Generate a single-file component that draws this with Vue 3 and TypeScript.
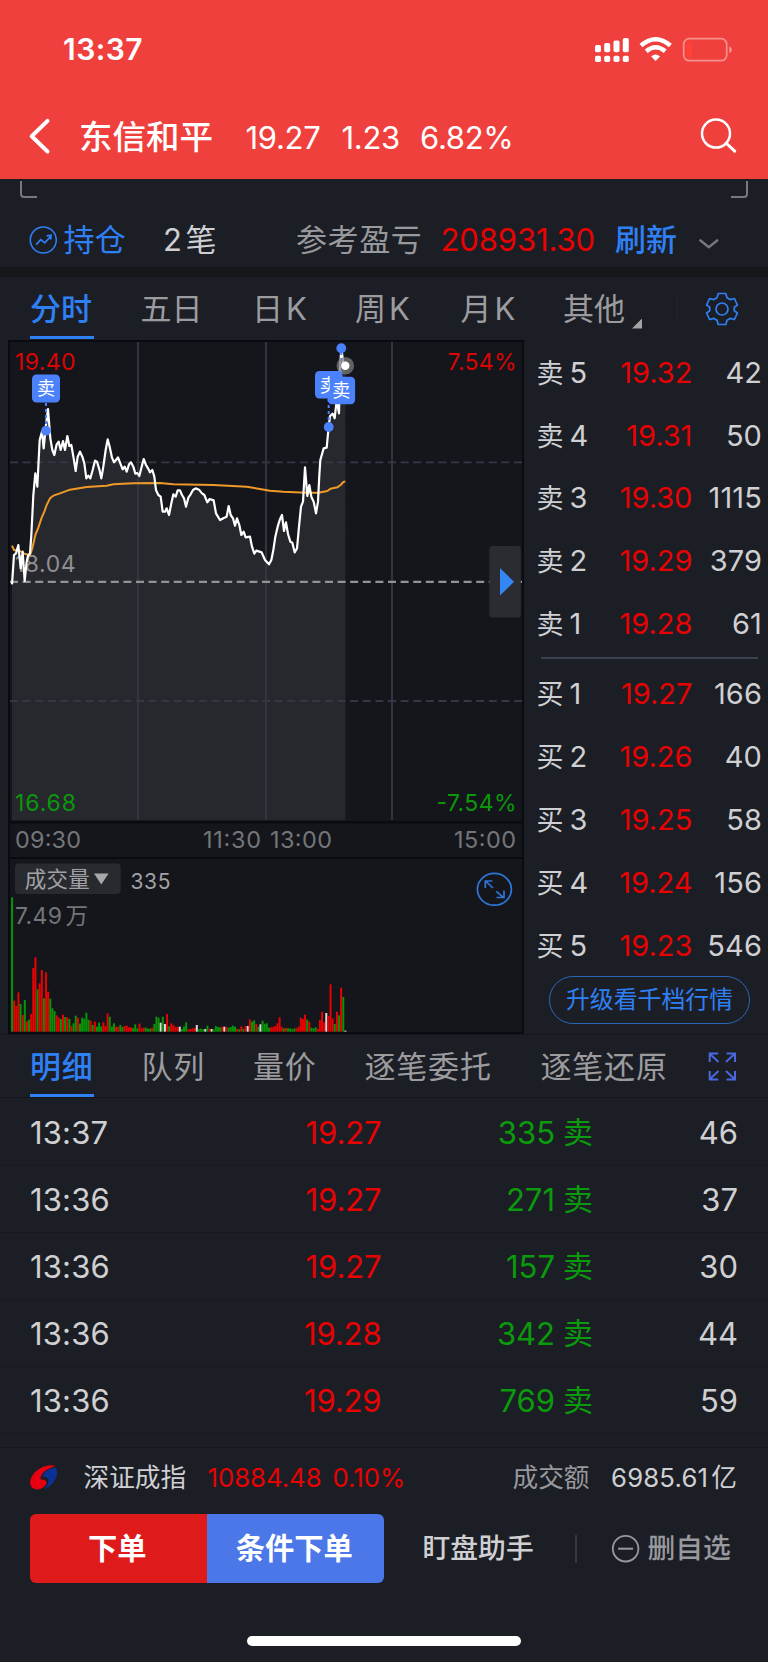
<script setup lang="ts">
type Side = 'r' | 'g' | 'w'
interface Quote { label: string; level: number; price: string; qty: string }
interface Trade { time: string; price: string; volume: string; count: string }

const asks: Quote[] = [
  { label: '卖', level: 5, price: '19.32', qty: '42' },
  { label: '卖', level: 4, price: '19.31', qty: '50' },
  { label: '卖', level: 3, price: '19.30', qty: '1115' },
  { label: '卖', level: 2, price: '19.29', qty: '379' },
  { label: '卖', level: 1, price: '19.28', qty: '61' },
]
const bids: Quote[] = [
  { label: '买', level: 1, price: '19.27', qty: '166' },
  { label: '买', level: 2, price: '19.26', qty: '40' },
  { label: '买', level: 3, price: '19.25', qty: '58' },
  { label: '买', level: 4, price: '19.24', qty: '156' },
  { label: '买', level: 5, price: '19.23', qty: '546' },
]
const trades: Trade[] = [
  { time: '13:37', price: '19.27', volume: '335', count: '46' },
  { time: '13:36', price: '19.27', volume: '271', count: '37' },
  { time: '13:36', price: '19.27', volume: '157', count: '30' },
  { time: '13:36', price: '19.28', volume: '342', count: '44' },
  { time: '13:36', price: '19.29', volume: '769', count: '59' },
]

/* Minute prices, in thirds of a pixel. */
const price =
  '36,748 42,660 48,655 55,630 62,700 68,650 74,738 80,680 84,662 90,655 94,600 100,480 106,415 112,455 119,315 126,290 131,340 138,270 144,222 151,310 157,345 163,360 170,328 176,320 182,345 189,318 195,345 202,303 208,333 214,330 221,370 227,408 233,365 240,350 247,365 253,385 259,430 265,422 271,430 278,405 285,377 291,380 298,403 304,430 310,395 317,345 323,313 329,335 336,368 342,382 348,375 354,367 361,385 368,403 374,395 380,410 387,388 393,382 400,395 406,416 412,414 418,423 425,395 431,372 438,390 444,400 450,412 457,405 463,425 468,465 475,480 482,485 488,530 495,530 500,520 507,540 514,505 520,478 527,485 533,466 540,466 546,480 552,490 558,515 565,488 572,478 579,465 587,460 597,464 606,475 613,480 622,502 629,492 641,496 648,535 660,555 673,548 680,545 686,513 692,540 699,550 705,572 711,550 718,570 724,600 731,590 737,607 750,605 756,635 763,656 769,647 785,652 795,675 807,688 814,675 820,645 826,605 833,575 839,555 846,540 852,588 858,562 864,597 871,620 877,623 884,652 891,640 897,575 903,515 909,500 915,397 922,483 928,450 934,485 941,500 948,535 954,500 958,420 961,375 971,340 980,338 986,276 990,243 998,236 1004,250 1010,195 1017,235 1020,100 1024,40 1030,85 1036,92'
const average =
  '36,632 42,645 60,648 75,657 90,660 97,640 106,600 115,578 125,548 133,530 140,510 150,490 160,482 180,475 210,464 260,456 320,452 340,448 400,445 480,444 520,448 640,450 740,455 775,461 810,467 850,470 920,473 955,473 982,468 992,461 1012,457 1022,450 1030,441 1036,439'
const area = `36,1456 ${price} 1036,1456`

const volumeData =
  'g352 r662 r678 r637 g672 r705 g660 r724 g719 r702 r564 r532 g628 r610 r570 g655 r577 r635 g656 g685 g693 r706 r713 g717 r704 g711 r712 g717 r738 g730 g707 r713 g731 g713 g716 g698 g719 r722 g735 r725 g740 g728 g739 r727 r738 r700 g710 g740 g730 r740 r740 g735 g741 r738 r737 r742 r742 g744 g733 g745 r731 r745 r743 g743 g746 g746 r743 g732 g710 g713 w728 g710 w732 r702 g739 r730 r735 r740 r741 w740 g747 g739 g727 r748 r747 r745 r744 w735 g748 g746 g748 w747 g737 r746 w747 g748 g738 g741 g742 r740 w740 r741 g743 g741 g737 g740 r747 g748 r739 g747 r738 w738 r718 g725 g721 r732 g740 w733 g722 g731 g730 g743 r742 r741 r738 r730 r712 r740 g745 r744 g745 g745 g748 g745 r744 r740 r713 r717 r704 g719 r725 g743 g745 g742 r747 r720 r695 r727 w699 r708 r613 r715 g732 r695 g706 r623 g651 w752'
const fills: Record<Side, string> = { r: '#e80202', g: '#079407', w: '#dcdcdc' }
const entries = volumeData.split(' ')
const volumes = entries.map((v, i) => ({
  x: 33.2 + (i * 1000) / (entries.length - 1),
  y: Number(v.slice(1)),
  h: 755 - Number(v.slice(1)),
  fill: fills[v[0] as Side],
}))
</script>

<template>
  <div class="app">
    <header class="head">
      <div class="status">
        <span class="clock">13:37</span>
        <svg class="status-icons" width="140" height="30" viewBox="592 33 140 30">
          <g fill="#fff">
            <rect x="595" y="44" width="6" height="7.300" rx="1.800" /><rect x="604.200" y="42" width="6" height="9.300" rx="1.800" />
            <rect x="613.500" y="39.500" width="6" height="11.800" rx="1.800" /><rect x="622.800" y="37" width="6" height="14.300" rx="1.800" />
            <rect x="595" y="54.700" width="6" height="6.400" rx="1.800" /><rect x="604.200" y="54.700" width="6" height="6.400" rx="1.800" />
            <rect x="613.500" y="54.700" width="6" height="6.400" rx="1.800" /><rect x="622.800" y="54.700" width="6" height="6.400" rx="1.800" />
            <path d="M655.600 60l-4.400-4.500q4.400-4 8.800 0z" />
          </g>
          <path d="M641 44.500q14.600-12.600 29.400 0M646.200 50.300q9.400-8 19 0" fill="none" stroke="#fff" stroke-width="4.400" />
          <rect x="683.700" y="37.700" width="43" height="22" rx="5.600" fill="none" stroke="#fff" stroke-opacity=".42" stroke-width="1.700" />
          <rect x="686.300" y="40.500" width="5.700" height="16.400" rx="2.400" fill="#ff4238" />
          <path d="M729.300 45.200q2.500 1 2.500 3.500t-2.500 3.500z" fill="#fff" fill-opacity=".45" />
        </svg>
      </div>
      <div class="title">
        <svg class="back" width="24" height="40" viewBox="0 0 24 40"><path d="M20.500 3.900L4.700 19.300l15.800 15.200" fill="none" stroke="#fff" stroke-width="4" stroke-linecap="round" stroke-linejoin="round" /></svg>
        <h1>东信和平</h1>
        <span class="t-price">19.27</span>
        <span class="t-change">1.23</span>
        <span class="t-pct">6.82%</span>
        <svg class="search" width="38" height="38" viewBox="0 0 38 38"><circle cx="16" cy="15.600" r="14" fill="none" stroke="#fff" stroke-width="2.500" /><path d="M26.100 25l8.600 8.200" stroke="#fff" stroke-width="3" stroke-linecap="round" /></svg>
      </div>
    </header>

    <div class="brackets"><i class="bl"></i><i class="br"></i></div>

    <section class="holding">
      <svg width="28" height="28" viewBox="0 0 28 28" fill="none" stroke="#2f80f5" stroke-width="1.600"><circle cx="14.300" cy="14" r="13" /><path d="M7.100 18.600l4.700-5 4 3.300 5.700-6.400M17.600 9.800l4.400-.5-.3 4.200" stroke-width="1.700" /></svg>
      <span class="hold-name">持仓</span>
      <span class="hold-count">2<b>笔</b></span>
      <span class="hold-label">参考盈亏</span>
      <span class="hold-value">208931.30</span>
      <span class="hold-refresh">刷新</span>
      <svg class="chev" width="22" height="12" viewBox="0 0 22 12"><path d="M1.600 1.700l9.200 7.600L20 1.700" fill="none" stroke="#77787c" stroke-width="2.400" /></svg>
    </section>

    <div class="band"></div>

    <nav class="periods">
      <span class="on">分时</span><span>五日</span><span>日<em>K</em></span><span>周<em>K</em></span><span>月<em>K</em></span><span>其他</span>
      <i class="tri"></i><i class="vsep"></i>
      <svg class="gear" width="34" height="34" viewBox="-17 -17 34 34" fill="none" stroke="#2f80f5" stroke-width="1.700" stroke-linejoin="round">
        <circle r="6" />
        <path d="M-3.800-15.500h7.600l1.200 4.300 3.100 1.800 4.300-1.100 3 6.500-3.100 2.200v3.600l3.100 2.200-3 6.500-4.300-1.100-3.100 1.800-1.200 4.300h-7.600l-1.200-4.300-3.100-1.800-4.300 1.100-3-6.500 3.100-2.200v-3.600l-3.100-2.200 3-6.500 4.300 1.100 3.100-1.800z" />
      </svg>
    </nav>

    <main class="market">
      <svg class="chart" width="516" height="694" viewBox="8 340 516 694">
        <defs><clipPath id="half"><rect x="315" y="371" width="14.700" height="27.500" /></clipPath></defs>
        <rect x="8" y="340" width="516" height="694" fill="#0a0b10" />
        <path d="M10 342H522V821H10zM10 823.500H522V857H10zM10 859H522V1032H10z" fill="#15161b" />
        <g transform="translate(0 335) scale(.333333)"><polygon :points="area" fill="#27282d" /></g>
        <path d="M138 342V820M266 342V820M392 342V820" stroke="#353643" stroke-width="1.900" />
        <path d="M10 462.300H522M10 701H522" stroke="#363646" stroke-width="1.800" stroke-dasharray="8 4.600" />
        <path d="M10 581.800H522" stroke="#939396" stroke-width="2.200" stroke-dasharray="8 4.600" />
        <g class="num" font-size="23">
          <text x="15" y="370" textLength="60.500" fill="#dc0404">19.40</text>
          <text x="516.500" y="370" text-anchor="end" textLength="69" fill="#dc0404">7.54%</text>
          <text x="15" y="571.500" textLength="60.500" fill="#8f8f92">18.04</text>
          <text x="15" y="810.600" textLength="61" fill="#0b970b">16.68</text>
          <text x="516.500" y="810.600" text-anchor="end" textLength="80" fill="#0b970b">-7.54%</text>
        </g>
        <g transform="translate(0 335) scale(.333333)" fill="none" stroke-linejoin="round">
          <polyline :points="average" stroke="#ef9a28" stroke-width="6" />
          <polyline :points="price" stroke="#fff" stroke-width="6.600" />
        </g>
        <path d="M46 403V426M328.700 399V424M341.300 352V378" stroke="#4b82fb" stroke-width="2" stroke-dasharray="3 3" />
        <g fill="#4b82fb">
          <circle cx="46" cy="430.700" r="4.900" /><circle cx="341.300" cy="348.200" r="4.900" /><circle cx="328.700" cy="427" r="4.900" />
        </g>
        <circle cx="345.300" cy="365.700" r="8.800" fill="#818183" fill-opacity=".7" /><circle cx="345.300" cy="365.700" r="4.200" fill="#fff" />
        <g class="num" font-size="18" fill="#fff" text-anchor="middle">
          <rect x="32" y="374.500" width="28" height="28" rx="4.500" fill="#4b82fb" /><text x="46" y="395.300">卖</text>
          <rect x="315" y="371" width="27.500" height="27.500" rx="4.500" fill="#4b82fb" />
          <rect x="327.600" y="376.700" width="27.500" height="27.500" rx="4.500" fill="#4b82fb" />
          <text x="328.700" y="391.600" clip-path="url(#half)">卖</text>
          <text x="341.300" y="397.400">卖</text>
        </g>
        <rect x="489.300" y="546" width="31.500" height="71.500" rx="3" fill="#2b2c31" />
        <path d="M500 568l14 13.800-14 13.800z" fill="#3586f5" />
        <g class="num" font-size="23.400" fill="#747579">
          <text x="15" y="848" textLength="66">09:30</text><text x="203" y="848" textLength="58">11:30</text>
          <text x="270" y="848" textLength="62">13:00</text><text x="454" y="848" textLength="62">15:00</text>
        </g>
        <rect x="15" y="863.500" width="105.700" height="30.500" rx="4" fill="#272a2f" />
        <g class="num">
          <text x="24.800" y="886.800" font-size="21.500" textLength="65" fill="#a2a2a5">成交量</text>
          <text x="130.500" y="888.500" font-size="21" textLength="40" fill="#a2a2a5">335</text>
          <text x="15" y="924" font-size="23" textLength="47" fill="#747579">7.49</text>
          <text x="65.500" y="924" font-size="22.500" fill="#747579">万</text>
        </g>
        <path d="M94 873.500h14.600l-7.300 11z" fill="#a8a8aa" />
        <g fill="none" stroke="#2e76d8" stroke-width="1.700">
          <ellipse cx="494.400" cy="889.300" rx="17" ry="15.900" />
          <path d="M485.500 881l7.500 7M485.300 888v-7h7M496.300 891.300l7.500 6.500M504 890.500v7h-7.500" />
        </g>
        <g transform="translate(0 780) scale(.333333)">
          <rect v-for="(v, i) in volumes" :key="i" :x="v.x" :y="v.y" width="6" :height="v.h" :fill="v.fill" />
        </g>
      </svg>

      <aside class="book">
        <div v-for="q in asks" :key="'a' + q.level" class="quote"><span class="lv">{{ q.label }}<em>{{ q.level }}</em></span><span class="pr">{{ q.price }}</span><span class="qt">{{ q.qty }}</span></div>
        <hr />
        <div v-for="q in bids" :key="'b' + q.level" class="quote"><span class="lv">{{ q.label }}<em>{{ q.level }}</em></span><span class="pr">{{ q.price }}</span><span class="qt">{{ q.qty }}</span></div>
        <button class="upgrade">升级看千档行情</button>
      </aside>
    </main>

    <nav class="details">
      <span class="on">明细</span><span>队列</span><span>量价</span><span>逐笔委托</span><span>逐笔还原</span>
      <svg width="30" height="30" viewBox="0 0 30 30" fill="none" stroke="#4a67de" stroke-width="2"><path d="M1.700 11V2.500h8.500M2 3l8.500 8M18.500 2.500H27V11M26.500 3L18 11M1.700 20v8.500h8.500M2 28l8.500-8M27 20v8.500h-8.500M26.500 28L18 20" /></svg>
    </nav>

    <section class="trades">
      <div v-for="(t, i) in trades" :key="i" class="trade">
        <span class="tt">{{ t.time }}</span><span class="tp">{{ t.price }}</span><span class="tv">{{ t.volume }}</span><span class="ts">卖</span><span class="tc">{{ t.count }}</span>
      </div>
    </section>

    <section class="index">
      <svg width="28" height="26" viewBox="0 0 28 26"><path d="M25.500 1.200C19-1.500 8.500 2.200 3 9.800C-1.200 15.500-.8 21.500 4 23.800C8.500 25.600 14.500 23.200 16.200 18.800C17.200 16 14.500 14.200 10.800 14.600C9.500 9 17 3.300 25.500 1.200z" fill="#e60012" /><path d="M25.800 2.700C29 7.500 26.300 14.500 21.500 19.300C19 21.700 16 23.400 13.500 24C17.500 20.800 19.500 17 18 13.800C17 12 14.800 11.300 12.300 11.800C13.500 7 20 2.700 25.800 2.700z" fill="#0a3295" /></svg>
      <span class="ix-name">深证成指</span>
      <span class="ix-val">10884.48</span>
      <span class="ix-pct">0.10%</span>
      <span class="ix-label">成交额</span>
      <span class="ix-amt">6985.61<em>亿</em></span>
    </section>

    <footer class="actions">
      <div class="orders"><button class="buy">下单</button><button class="cond">条件下单</button></div>
      <span class="assist">盯盘助手</span>
      <i class="asep"></i>
      <svg width="30" height="30" viewBox="0 0 30 30" fill="none" stroke="#98999c" stroke-width="1.800"><circle cx="14.600" cy="14.700" r="12.800" /><path d="M7.100 14.700h15" stroke-width="2" /></svg>
      <span class="remove">删自选</span>
    </footer>
    <div class="home"></div>
  </div>
</template>

<style>
body { background: #fff; }
</style>

<style scoped>
* { box-sizing: border-box; }
.app {
  width: 768px; height: 1662px; overflow: hidden;
  display: flex; flex-direction: column;
  background: #1c1e26; color: #d0d0d2;
  font-family: Inter, "Noto Sans CJK SC", sans-serif;
  font-size: 31px; line-height: 1; white-space: nowrap;
}
.app > * { flex: none; }
em, b, i { font-style: normal; font-weight: inherit; }
button { border: 0; padding: 0; font: inherit; color: #fff; background: none; }
.num { font-family: Inter, "Noto Sans CJK SC", sans-serif; }

.head { height: 179px; background: #f0403d; color: #fff; }
.status { height: 98px; padding: 0 36px 0 63px; display: flex; align-items: center; justify-content: space-between; }
.clock { font-size: 30px; font-weight: 600; letter-spacing: .45px; }
.title { height: 78px; padding-left: 27px; display: flex; align-items: center; }
.title h1 { margin: 0 0 0 28px; padding-top: 1px; width: 166.500px; font-size: 33.500px; font-weight: 500; }
.title span { font-size: 31px; letter-spacing: -.3px; }
.t-price { width: 96px; }
.t-change { width: 78.500px; }
.search { margin-left: auto; margin-right: 30px; }

.brackets { height: 34px; padding: 2px 20px 0 20px; display: flex; justify-content: space-between; }
.brackets i { width: 17px; height: 17px; border-bottom: 2px solid #77787c; }
.bl { border-left: 2px solid #77787c; border-bottom-left-radius: 4px; }
.br { border-right: 2px solid #77787c; border-bottom-right-radius: 4px; }

.holding { height: 54px; padding-left: 29px; display: flex; align-items: center; }
.holding span { padding-bottom: 2px; }
.hold-name { margin-left: 6.500px; width: 99.500px; color: #2f80f5; letter-spacing: .3px; }
.hold-count { width: 133px; }
.hold-count b { margin-left: 3.500px; }
.hold-label { width: 144.500px; color: #98999c; letter-spacing: .6px; }
.hold-value { width: 174.500px; color: #e80202; letter-spacing: -.1px; }
.hold-refresh { width: 83px; color: #2f80f5; font-weight: 500; }
.chev { margin-top: 8px; }
.band { height: 10px; background: #16171b; }

.periods { height: 63px; display: grid; grid-template-columns: 110.500px 111.500px 103px 105.500px 102.500px 69px 45px 27.500px 34px; padding-left: 30px; color: #9c9c9f; align-items: center; }
.periods span { height: 61px; line-height: 61px; justify-self: start; }
.periods em { margin-left: 3px; font-size: 31px; }
.periods .on, .details .on { color: #2f80f5; font-weight: 500; border-bottom: 3px solid #2f80f5; width: 64px; }
.tri { width: 10px; height: 10px; margin-top: 30px; background: #a4a4a6; clip-path: polygon(100% 0, 100% 100%, 0 100%); }
.vsep { width: 1px; height: 26px; background: #23252d; }

.market { height: 694px; padding-left: 8px; display: flex; }
.chart { flex: none; }
.book { flex: none; width: 238px; padding: 1px 0 0 12.500px; }
.quote { height: 62.800px; display: flex; align-items: center; font-size: 29px; }
.lv { width: 60px; font-size: 27px; }
.lv em { font-size: 29px; margin-left: 6px; }
.pr { width: 97.700px; text-align: right; color: #e80202; letter-spacing: -.05px; }
.qt { width: 70.500px; text-align: right; letter-spacing: .1px; }
.book hr { margin: 2px 0 3.500px 4px; width: 217px; height: 2px; border: 0; background: #3d404e; }
.upgrade { margin: -.5px 0 0 12.500px; width: 201px; height: 48px; border: 1.500px solid #2b66b8; border-radius: 24px; color: #2f80f5; font-size: 23.900px; line-height: 44px; }

.details { height: 64px; border-top: 1px solid #15161b; border-bottom: 1px solid #15161b; padding-left: 30px; display: grid; grid-template-columns: 111.500px 111.500px 111.500px 176px 167.500px 30px; align-items: center; color: #9c9c9f; letter-spacing: .8px; }
.details span { height: 62px; line-height: 64px; justify-self: start; }

.trades { height: 350px; padding-top: 1px; border-bottom: 1px solid #17181e; }
.trade { height: 67px; padding-left: 30px; border-bottom: 1px solid #181a20; display: grid; grid-template-columns: 150px 201.500px 173.500px 75px 108px; align-items: center; }
.tt { letter-spacing: .15px; }
.tp { text-align: right; color: #e80202; letter-spacing: -.1px; }
.tv { text-align: right; color: #0b9a0b; }
.ts { padding-left: 8px; color: #0b9a0b; font-size: 30px; }
.tc { text-align: right; }

.index { height: 59px; padding-left: 29.500px; display: flex; align-items: center; font-size: 25.700px; }
.ix-name { margin-left: 26px; width: 124px; }
.ix-val { width: 125px; color: #e80202; }
.ix-pct { width: 180px; color: #e80202; }
.ix-label { width: 98.500px; color: #98999c; }
.ix-amt { letter-spacing: .2px; }
.ix-amt em { margin-left: 3px; }

.actions { margin-top: 7px; height: 69px; padding-left: 30px; display: flex; align-items: center; font-size: 27.800px; }
.orders { width: 354px; height: 69px; display: flex; border-radius: 6px; overflow: hidden; }
.orders button { width: 177px; padding-right: 2.500px; font-size: 29.300px; font-weight: 700; }
.buy { background: #de1a1a; }
.cond { background: #4b77e9; }
.assist { margin-left: 38.500px; width: 152.500px; font-weight: 500; }
.asep { width: 1.500px; height: 28px; background: #353843; margin-right: 34px; }
.remove { margin-left: 7px; font-weight: 500; color: #98999c; }

.home { margin: 53px 0 0 247px; width: 274px; height: 10px; border-radius: 5px; background: #fff; }
</style>
